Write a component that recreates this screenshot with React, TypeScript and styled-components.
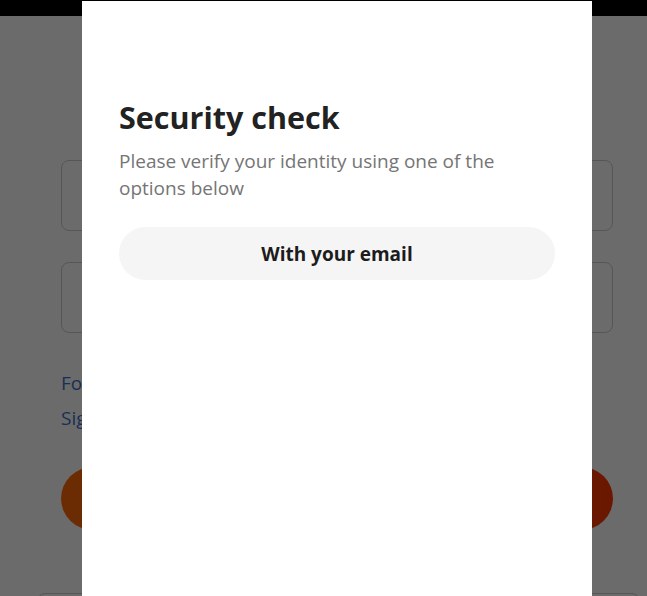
import React from "react";
import styled, { createGlobalStyle } from "styled-components";

const Global = createGlobalStyle`
  html, body { margin: 0; padding: 0; background: #ffffff; }
  body { font-family: "Open Sans", "Noto Sans", sans-serif; overflow: hidden; }
  * { box-sizing: border-box; }
`;

const Page = styled.div`
  width: 647px;
  height: 596px;
  overflow: hidden;
  background: #ffffff;
`;

const TopBar = styled.div`
  height: 16px;
  background: #000000;
`;

const Form = styled.div`
  margin-left: 61px;
  width: 552px;
  padding-top: 144px;
  display: flex;
  flex-direction: column;
`;

const Field = styled.div<{ $gap?: number }>`
  height: 71px;
  margin-top: ${(p) => p.$gap ?? 0}px;
  border: 1px solid #cccccc;
  border-radius: 8px;
  background: #ffffff;
`;

const Links = styled.div`
  margin-top: 33px;
  display: flex;
  flex-direction: column;
`;

const Link = styled.a`
  font-size: 19px;
  line-height: 35px;
  color: #3d72c8;
  text-decoration: none;
`;

const Submit = styled.button`
  margin-top: 31px;
  height: 63px;
  border: none;
  border-radius: 32px;
  background: linear-gradient(90deg, #ff6a0a, #ff3800);
  color: #ffffff;
  font-family: inherit;
  font-size: 19px;
  font-weight: 700;
`;

const BottomBox = styled.div`
  margin-left: 37px;
  margin-top: 63px;
  width: 603px;
  height: 40px;
  border: 1px solid #cccccc;
  border-radius: 8px;
`;

const Overlay = styled.div`
  position: fixed;
  inset: 0;
  background: rgba(0, 0, 0, 0.58);
`;

const Modal = styled.div`
  position: fixed;
  left: 82px;
  top: 1px;
  bottom: 0;
  width: 510px;
  background: #ffffff;
  padding: 98px 37px 0;
  display: flex;
  flex-direction: column;
`;

const Title = styled.h2`
  margin: 0;
  font-size: 30.5px;
  line-height: 36px;
  font-weight: 700;
  color: #222222;
`;

const Subtitle = styled.p`
  margin: 13px 0 0;
  font-size: 19px;
  line-height: 27px;
  color: #757575;
`;

const Option = styled.button`
  margin-top: 25px;
  height: 53px;
  width: 100%;
  border: none;
  border-radius: 27px;
  background: #f5f5f5;
  color: #1c1c1c;
  font-family: inherit;
  font-size: 19px;
  font-weight: 700;
  display: flex;
  align-items: center;
  justify-content: center;
  cursor: pointer;
`;

export default function App() {
  return (
    <>
      <Global />
      <Page>
        <TopBar />
        <Form>
          <Field />
          <Field $gap={31} />
          <Links>
            <Link href="#">Forgot password?</Link>
            <Link href="#">Sign up</Link>
          </Links>
          <Submit>Log in</Submit>
        </Form>
        <BottomBox />
      </Page>
      <Overlay />
      <Modal role="dialog">
        <Title>Security check</Title>
        <Subtitle>Please verify your identity using one of the options below</Subtitle>
        <Option>With your email</Option>
      </Modal>
    </>
  );
}
